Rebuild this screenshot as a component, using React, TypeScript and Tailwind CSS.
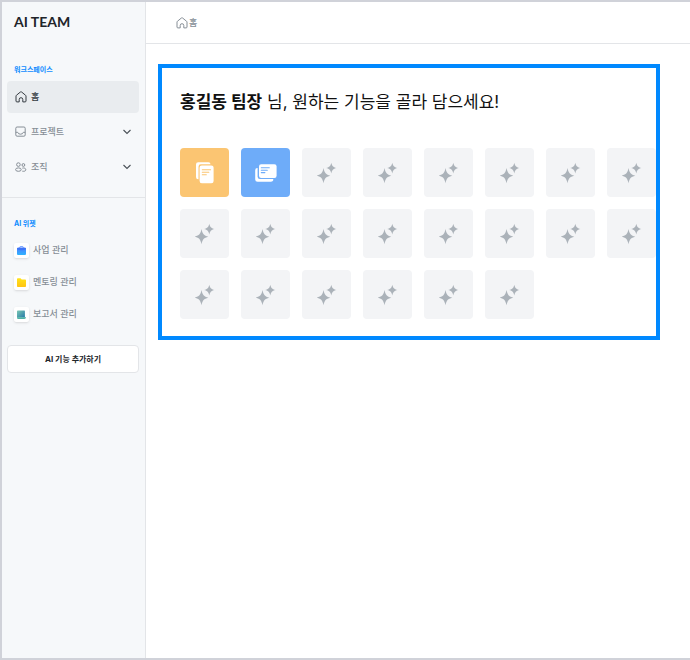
import { useState } from 'react'

const TILES = ['docs', 'cards', ...Array(20).fill('empty')]

function HomeIcon() {
  return (
    <svg width="12" height="12" viewBox="0 0 12 12" fill="none" stroke="currentColor" strokeWidth="1" strokeLinejoin="round" aria-hidden="true">
      <path d="M1 5.100Q1 4.600 1.400 4.300L5.400 1Q6 .6 6.600 1L10.600 4.300Q11 4.600 11 5.100V10a.9.9 0 0 1-.9.9H7.800V8.500a1.800 1.800 0 0 0-3.600 0V10.900H1.900a.9.9 0 0 1-.9-.9Z" />
    </svg>
  )
}

function InboxIcon() {
  return (
    <svg width="12" height="12" viewBox="0 0 12 12" fill="none" stroke="currentColor" strokeWidth="1" strokeLinejoin="round" aria-hidden="true">
      <rect x=".8" y="1" width="9.400" height="9.200" rx="1.300" />
      <path d="M.8 6.300h1.900q.5 1.900 2.800 1.900t2.800-1.900h1.900" />
    </svg>
  )
}

function PeopleIcon() {
  return (
    <svg width="12" height="12" viewBox="0 0 12 12" fill="none" stroke="currentColor" strokeWidth="1" aria-hidden="true">
      <circle cx="3.400" cy="3.600" r="1.800" />
      <circle cx="8.400" cy="4" r="1.400" />
      <ellipse cx="3.400" cy="8.600" rx="2.800" ry="1.700" />
      <path d="M7.300 7.100c2-.4 3.500.2 3.500 1.600S9.300 10.500 7.300 10.200" />
    </svg>
  )
}

function ChevronIcon() {
  return (
    <svg width="8" height="6" viewBox="0 0 8 6" fill="none" stroke="currentColor" strokeWidth="1.100" aria-hidden="true">
      <path d="M.5 1 4 4.500 7.500 1" />
    </svg>
  )
}

function BriefcaseIcon() {
  return (
    <svg width="9" height="9" viewBox="0 0 9 9" aria-hidden="true">
      <defs>
        <linearGradient id="case" x1="0" y1="0" x2="0" y2="1">
          <stop offset="0" stopColor="#4a7dff" />
          <stop offset="1" stopColor="#2fb4ff" />
        </linearGradient>
      </defs>
      <path d="M2.800 2V1.200a.6.6 0 0 1 .6-.6h2.200a.6.6 0 0 1 .6.6V2" fill="none" stroke="#4a86ff" strokeWidth=".8" />
      <rect x="0" y="1.700" width="9" height="7.300" rx="1" fill="url(#case)" />
      <path d="M0 2.700a1 1 0 0 1 1-1h7a1 1 0 0 1 1 1v.600Q4.500 5 0 3.300Z" fill="#3e74f6" />
    </svg>
  )
}

function FolderIcon() {
  return (
    <svg width="9" height="9" viewBox="0 0 9 9" aria-hidden="true">
      <defs>
        <linearGradient id="folder" x1="0" y1="0" x2="0" y2="1">
          <stop offset="0" stopColor="#ffe21a" />
          <stop offset="1" stopColor="#ffc414" />
        </linearGradient>
      </defs>
      <path d="M0 1A.8.8 0 0 1 .8.200h2.700l1.200 1.300h3.500a.8.8 0 0 1 .8.8v5.900a.8.8 0 0 1-.8.8H.8a.8.8 0 0 1-.8-.8Z" fill="url(#folder)" />
    </svg>
  )
}

function ReportIcon() {
  return (
    <svg width="9" height="9" viewBox="0 0 9 9" aria-hidden="true">
      <defs>
        <linearGradient id="report" x1="0" y1="0" x2="1" y2="1">
          <stop offset="0" stopColor="#7cc9b4" />
          <stop offset="1" stopColor="#2478a8" />
        </linearGradient>
      </defs>
      <path d="M.8.500H7.400a.5.5 0 0 1 .5.500V7.500H0V1.300A.8.8 0 0 1 .8.500Z" fill="url(#report)" />
      <path d="M0 7.200H9A1.700 1.700 0 0 1 7.400 9H1.300A1.300 1.300 0 0 1 0 7.700Z" fill="#4fb3a5" />
    </svg>
  )
}

function SparkleIcon() {
  return (
    <svg width="20" height="22" viewBox="0 0 20 22" fill="#abb2b9" aria-hidden="true">
      <path d="M6.500 6.100C7.600 11.200 8.800 12.600 13.300 13.700 8.800 14.800 7.600 16.200 6.500 21.300 5.400 16.200 4.200 14.800-.3 13.700 4.200 12.600 5.400 11.200 6.500 6.100Z" />
      <path d="M14.300.8C15.100 4.100 16.100 5.200 19.400 6.100 16.100 7 15.100 8.100 14.300 11.400 13.500 8.100 12.500 7 9.200 6.100 12.500 5.200 13.500 4.100 14.300.8Z" />
    </svg>
  )
}

function DocsIcon() {
  return (
    <svg width="18" height="22" viewBox="0 0 18 22" aria-hidden="true">
      <path d="M2.200.300h10.300a2 2 0 0 1 2 2H4.900a2.400 2.400 0 0 0-2.400 2.400v12.600A2.300 2.300 0 0 1 0 15V2.500A2.200 2.200 0 0 1 2.200.300Z" fill="#fff" />
      <rect x="3.600" y="3.600" width="14" height="17.600" rx="2.200" fill="#fff" />
      <path d="M6.300 7.700h8.300M6.300 10.200h6.500M6.300 12.700h4" stroke="#fbc572" strokeWidth="1.100" strokeLinecap="round" />
    </svg>
  )
}

function CardsIcon() {
  return (
    <svg width="22" height="18" viewBox="0 0 22 18" aria-hidden="true">
      <path d="M2.600 4v8.700a2.400 2.400 0 0 0 2.400 2.400h13.300a2.500 2.500 0 0 1-2.500 2.700H2.600A2.400 2.400 0 0 1 .2 15.400V6.300A2.300 2.300 0 0 1 2.600 4Z" fill="#fff" />
      <rect x="4" y=".3" width="17.600" height="13.600" rx="2.200" fill="#fff" />
      <path d="M6.300 3.800h8M6.300 6.200h6M6.300 8.600h3.600" stroke="#6eacf9" strokeWidth="1.100" strokeLinecap="round" />
    </svg>
  )
}

const WIDGETS = [
  { label: '사업 관리', icon: <BriefcaseIcon /> },
  { label: '멘토링 관리', icon: <FolderIcon /> },
  { label: '보고서 관리', icon: <ReportIcon /> },
]

const GROUPS = [
  { label: '프로젝트', icon: <InboxIcon /> },
  { label: '조직', icon: <PeopleIcon /> },
]

export default function App() {
  const [open, setOpen] = useState('')

  return (
    <div className="flex min-h-screen border-2 border-r-0 border-[#d0d2d9] bg-white font-['Inter','Noto_Sans_CJK_KR',sans-serif]">
      <aside className="w-36 shrink-0 border-r border-[#e3e5e8] bg-[#f6f8fa]">
        <div className="flex h-10 items-center px-3 font-['Lato',sans-serif] text-sm font-bold text-[#212429]">AI TEAM</div>

        <nav className="mt-5 pr-[6px] pl-[5px]">
          <h2 className="mb-1 px-[7px] text-[7px] leading-[15px] font-bold text-[#0f8cff]">워크스페이스</h2>
          <a href="#home" className="flex h-8 items-center gap-1 rounded bg-[#e9ecef] px-2 text-[9px] font-medium text-[#343a40]">
            <HomeIcon />
            홈
          </a>
          <div className="mt-[3px] space-y-[3px]">
            {GROUPS.map(group => (
              <button
                key={group.label}
                type="button"
                aria-expanded={open === group.label}
                onClick={() => setOpen(prev => (prev === group.label ? '' : group.label))}
                className="flex h-8 w-full items-center gap-1 px-2 text-[9px] font-medium text-[#868e96]"
              >
                {group.icon}
                {group.label}
                <span className="ml-auto text-[#495057]">
                  <ChevronIcon />
                </span>
              </button>
            ))}
          </div>
        </nav>

        <section className="mt-[14px] border-t border-[#e3e5e8] pt-[18px] pr-[6px] pl-[5px]">
          <h2 className="px-[7px] text-[7px] leading-[15px] font-bold text-[#0f8cff]">AI 위젯</h2>
          <ul className="mt-[3px] px-[7px]">
            {WIDGETS.map(widget => (
              <li key={widget.label}>
                <a href="#widget" className="flex h-8 items-center gap-1 text-[9px] font-medium text-[#868e96]">
                  <span className="flex size-[15px] items-center justify-center rounded-xs bg-white shadow-sm">{widget.icon}</span>
                  {widget.label}
                </a>
              </li>
            ))}
          </ul>
          <button type="button" className="mt-[15px] h-7 w-full rounded border border-[#e3e5e8] bg-white text-[8px] font-bold text-[#212529]">
            AI 기능 추가하기
          </button>
        </section>
      </aside>

      <div className="min-w-0 flex-1">
        <header className="flex h-[42px] items-center gap-px border-b border-[#e3e5e8] px-[30px] text-[9px] font-medium text-[#868e96]">
          <HomeIcon />
          <span>홈</span>
        </header>

        <main className="mt-5 mr-[30px] ml-3 overflow-hidden border-4 border-[#0089ff] px-[18px] pt-5 pb-[17px]">
          <h1 className="text-[17px] leading-7 whitespace-nowrap text-[#111]">
            <strong className="font-bold">홍길동 팀장</strong> 님, 원하는 기능을 골라 담으세요!
          </h1>
          <div className="mt-8 grid grid-cols-[repeat(8,49px)] gap-3">
            {TILES.map((tile, i) => {
              if (tile === 'docs') {
                return (
                  <button key={i} type="button" aria-label="문서" className="flex h-[49px] items-center justify-center rounded bg-[#fbc572]">
                    <DocsIcon />
                  </button>
                )
              }
              if (tile === 'cards') {
                return (
                  <button key={i} type="button" aria-label="카드" className="flex h-[49px] items-center justify-center rounded bg-[#6eacf9]">
                    <CardsIcon />
                  </button>
                )
              }
              return (
                <button key={i} type="button" aria-label="기능 추가" className="flex h-[49px] items-center justify-center rounded bg-[#f3f4f6]">
                  <SparkleIcon />
                </button>
              )
            })}
          </div>
        </main>
      </div>
    </div>
  )
}
